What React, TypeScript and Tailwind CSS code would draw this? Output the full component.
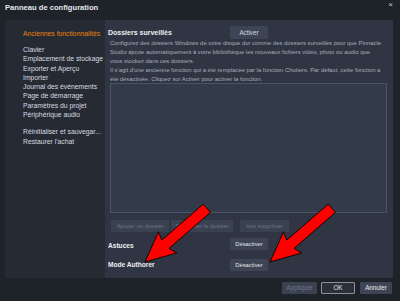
import React from "react";

const font = { fontFamily: '"Liberation Sans", Arial, sans-serif' };

function Arrow({ tipX, tipY }: { tipX: number; tipY: number }) {
  const L = 82;
  const hl = 30;
  const hw = 14;
  const sw = 5.5;
  const pts = [
    [0, 0],
    [-hl, -hw],
    [-hl + 3, -sw],
    [-L, -sw],
    [-L, sw],
    [-hl + 3, sw],
    [-hl, hw],
  ]
    .map((p) => p.join(","))
    .join(" ");
  return (
    <polygon
      points={pts}
      transform={`translate(${tipX} ${tipY}) rotate(139)`}
      fill="#ff0000"
      stroke="#000"
      strokeWidth={0.8}
      strokeLinejoin="miter"
    />
  );
}

const menu = [
  "Clavier",
  "Emplacement de stockage",
  "Exporter et Aperçu",
  "Importer",
  "Journal des événements",
  "Page de démarrage",
  "Paramètres du projet",
  "Périphérique audio",
];

export default function App() {
  return (
    <div
      className="relative w-[400px] h-[301px] bg-[#1e2229] flex flex-col overflow-hidden text-[#d6dae1]"
      style={font}
    >
      {/* title bar */}
      <div className="h-[20px] flex items-start justify-between pl-[5px] pr-[7px] pt-[3px]">
        <span className="text-[7.6px] font-bold text-[#e4e6ea] leading-[10px]">
          Panneau de configuration
        </span>
        <span className="text-[8px] leading-[6px] text-[#c8ccd3] mt-[-1px]">×</span>
      </div>

      {/* main */}
      <div className="flex h-[258px] ml-[5px] mr-[7px]">
        {/* sidebar */}
        <div className="w-[100px] bg-[#262a33] pl-[18px] pt-[9px] flex flex-col text-[6.8px] leading-[9.3px]">
          <div className="text-[#e8830c] h-[9.3px] whitespace-nowrap">Anciennes fonctionnalités</div>
          <div className="h-[6.7px]" />
          {menu.map((m) => (
            <div key={m} className="h-[9.3px] whitespace-nowrap">
              {m}
            </div>
          ))}
          <div className="h-[8px]" />
          <div className="h-[9.3px] whitespace-nowrap">Réinitialiser et sauvegar...</div>
          <div className="h-[9.3px] whitespace-nowrap">Restaurer l'achat</div>
        </div>

        {/* content */}
        <div className="flex-1 bg-[#2f3542] flex flex-col pr-[6px]">
          {/* header row */}
          <div className="h-[19px] pt-[6px] flex items-start">
            <div className="w-[125px] pl-[3px] text-[7px] font-bold text-[#eceef1] leading-[13px]">
              Dossiers surveillés
            </div>
            <div className="w-[38px] h-[13px] bg-[#3d4454] rounded-[1px] flex items-center justify-center text-[6.3px] text-[#d8dce2]">
              Activer
            </div>
          </div>

          {/* description */}
          <div className="h-[44px] pl-[5px] text-[5.88px] leading-[8.8px] text-[#a6adb9] whitespace-nowrap">
            <div>Configurez des dossiers Windows de votre disque dur comme des dossiers surveillés pour que Pinnacle</div>
            <div>Studio ajoute automatiquement à votre bibliothèque les nouveaux fichiers vidéo, photo ou audio que</div>
            <div>vous stockez dans ces dossiers.</div>
            <div className="mt-[1px]">Il s'agit d'une ancienne fonction qui a été remplacée par la fonction Chutiers. Par défaut, cette fonction a</div>
            <div>été désactivée. Cliquez sur Activer pour activer la fonction.</div>
          </div>

          {/* list box */}
          <div className="ml-[5px] h-[130px] border border-[#4b5366] bg-[#333a49]" />

          {/* folder buttons */}
          <div className="mt-[7px] h-[12px] flex pl-[6px] text-[5.8px] text-[#6f7788]">
            <div className="w-[58px] h-[12px] bg-[#3a4150] flex items-center justify-center rounded-[1px]">
              Ajouter un dossier
            </div>
            <div className="ml-[2px] w-[62px] h-[12px] bg-[#3a4150] flex items-center justify-center rounded-[1px]">
              Supprimer le dossier
            </div>
            <div className="ml-[7px] w-[49px] h-[12px] bg-[#3a4150] flex items-center justify-center rounded-[1px]">
              tout supprimer
            </div>
          </div>

          {/* Astuces */}
          <div className="mt-[6px] h-[12px] flex items-center">
            <div className="w-[125px] pl-[3px] text-[6.6px] font-bold text-[#eceef1] mt-[4px]">Astuces</div>
            <div className="w-[38px] h-[12px] bg-[#3d4454] rounded-[1px] flex items-center justify-center text-[5.8px] text-[#e0e3e8]">
              Désactiver
            </div>
          </div>

          {/* Mode Authorer */}
          <div className="mt-[9px] h-[12px] flex items-center">
            <div className="w-[125px] pl-[3px] text-[6.6px] font-bold text-[#eceef1] mt-[-1px]">Mode Authorer</div>
            <div className="w-[38px] h-[12px] bg-[#3d4454] rounded-[1px] flex items-center justify-center text-[5.8px] text-[#e0e3e8]">
              Désactiver
            </div>
          </div>
        </div>
      </div>

      {/* footer */}
      <div className="flex-1 flex items-start justify-end pr-[8px] pt-[4px] text-[6.3px]">
        <div className="w-[35px] h-[12px] bg-[#3a4150] text-[#6f7788] flex items-center justify-center rounded-[1px]">
          Appliquer
        </div>
        <div className="ml-[4px] w-[34px] h-[12px] border border-[#8a919e] bg-[#2b303a] text-[#e6e8ec] flex items-center justify-center rounded-[1px]">
          OK
        </div>
        <div className="ml-[5px] w-[32px] h-[12px] bg-[#3d4454] text-[#eceef1] flex items-center justify-center rounded-[1px]">
          Annuler
        </div>
      </div>

      {/* arrows overlay */}
      <svg
        className="absolute left-0 top-0 pointer-events-none"
        width={400}
        height={301}
        viewBox="0 0 400 301"
      >
        <Arrow tipX={145} tipY={262} />
        <Arrow tipX={270} tipY={262} />
      </svg>
    </div>
  );
}
